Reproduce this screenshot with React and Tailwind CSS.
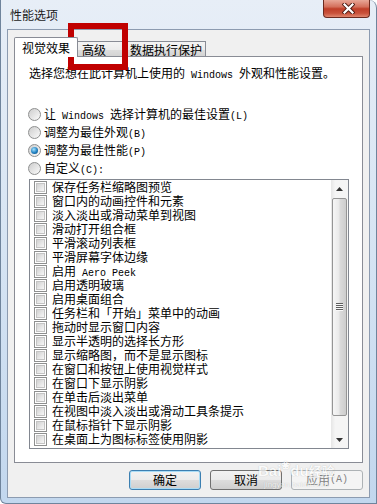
import React from "react";

// SimSun-like half-width latin run
const M = ({ children }) => (
  <span className="font-['Liberation_Mono',monospace] text-[10px] leading-[10px]">{children}</span>
);

const mixText = (text) =>
  text.split(/([\x20-\x7e]+)/).map((part, i) =>
    /^[\x20-\x7e]+$/.test(part) ? <M key={i}>{part}</M> : <span key={i}>{part}</span>
  );

const effects = [
  "保存任务栏缩略图预览",
  "窗口内的动画控件和元素",
  "淡入淡出或滑动菜单到视图",
  "滑动打开组合框",
  "平滑滚动列表框",
  "平滑屏幕字体边缘",
  "启用 Aero Peek",
  "启用透明玻璃",
  "启用桌面组合",
  "任务栏和「开始」菜单中的动画",
  "拖动时显示窗口内容",
  "显示半透明的选择长方形",
  "显示缩略图，而不是显示图标",
  "在窗口和按钮上使用视觉样式",
  "在窗口下显示阴影",
  "在单击后淡出菜单",
  "在视图中淡入淡出或滑动工具条提示",
  "在鼠标指针下显示阴影",
  "在桌面上为图标标签使用阴影",
];

const radios = [
  { label: "让 Windows 选择计算机的最佳设置(L)", checked: false },
  { label: "调整为最佳外观(B)", checked: false },
  { label: "调整为最佳性能(P)", checked: true },
  { label: "自定义(C):", checked: false },
];

const Radio = ({ checked }) => (
  <span className="flex h-[13px] w-[13px] shrink-0 items-center justify-center rounded-full border border-[#8e8f8f] bg-linear-to-br from-[#cdcdcd] to-[#fbfbfb]">
    {checked && (
      <span className="h-[7px] w-[7px] rounded-full bg-[radial-gradient(circle_at_40%_35%,#a6e3ff,#1f7fc0_55%,#0b4676)]" />
    )}
  </span>
);

const Checkbox = () => (
  <span className="flex h-[13px] w-[13px] shrink-0 items-center justify-center border border-[#8e8f8f] bg-white">
    <span className="h-[9px] w-[9px] border border-[#c4c4c4] bg-linear-to-br from-[#d2d2d2] to-[#f7f7f7]" />
  </span>
);

const Button = ({ children, primary, disabled }) => (
  <div
    className={`flex h-[20px] w-[72px] items-center justify-center rounded-[3px] border leading-[14px] ${
      disabled
        ? "border-[#adb2b5] bg-[#f4f4f4] text-[#838383]"
        : primary
        ? "border-[#3c7fb1] bg-[linear-gradient(#f2f2f2,#ebebeb_50%,#dddddd_50%,#cfcfcf)] shadow-[inset_0_0_0_1px_#a9dcf6]"
        : "border-[#707070] bg-[linear-gradient(#f2f2f2,#ebebeb_50%,#dddddd_50%,#cfcfcf)]"
    }`}
  >
    {children}
  </div>
);

const App = () => {
  return (
    <div className="relative h-[504px] w-[377px] overflow-hidden bg-white font-['Noto_Sans_CJK_SC','Liberation_Sans',sans-serif] text-[12px] text-black">
      {/* Window frame */}
      <div className="flex h-full w-full flex-col rounded-tr-[8px] rounded-bl-[6px] border-r border-b border-l border-[#6f849c] bg-linear-to-b from-[#e7eef7] via-[#d6e4f3] to-[#c2d7ee]">
        {/* Title bar */}
        <div className="flex h-[29px] shrink-0 items-start justify-between">
          <span className="ml-[9px] mt-[8px] leading-[14px] text-[#1a1a1a]">性能选项</span>
          <div className="mr-[6px] flex h-[18px] w-[47px] items-center justify-center rounded-b-[4px] border border-t-0 border-[#6b2a1f] bg-[linear-gradient(#e8a797,#d4705c_40%,#bf3e28_52%,#c9523b_78%,#e0866e)]">
            <svg width="13" height="11" viewBox="0 0 13 11" className="ml-[3px]">
              <path d="M2.5 1.5 L10.5 9.5 M10.5 1.5 L2.5 9.5" stroke="#4b1a12" strokeWidth="4" strokeLinecap="square" />
              <path d="M2.5 1.5 L10.5 9.5 M10.5 1.5 L2.5 9.5" stroke="#ffffff" strokeWidth="2.2" strokeLinecap="square" />
            </svg>
          </div>
        </div>

        {/* Client area */}
        <div className="ml-[6px] flex h-[469px] w-[363px] flex-col border border-[#8c9bb0] bg-[#f0f0f0] pl-[6px] pt-[7px]">
          {/* Tabs */}
          <div className="flex h-[20px] items-end">
            <div className="relative z-10 flex h-[20px] w-[64px] items-center rounded-t-[2px] border border-b-0 border-[#898c95] bg-white pl-[7px] leading-[14px]">
              视觉效果
            </div>
            <div className="-ml-px flex h-[16px] w-[48px] items-center border border-b-0 border-[#898c95] bg-[linear-gradient(#f4f4f4,#ececec_50%,#dedede_50%,#d2d2d2)] pl-[4px] leading-[14px]">
              高级
            </div>
            <div className="-ml-px flex h-[16px] w-[82px] items-center border border-b-0 border-[#898c95] bg-[linear-gradient(#f4f4f4,#ececec_50%,#dedede_50%,#d2d2d2)] pl-[5px] leading-[14px]">
              数据执行保护
            </div>
          </div>

          {/* Tab panel */}
          <div className="-mt-px flex h-[407px] w-[349px] flex-col border border-[#898c95] bg-white">
            <p className="ml-[14px] mt-[9px] leading-[14px]">{mixText("选择您想在此计算机上使用的 Windows 外观和性能设置。")}</p>

            <div className="mt-[24px] flex flex-col">
              {radios.map((r) => (
                <div key={r.label} className="ml-[13px] flex h-[18px] items-center gap-[3px] leading-[14px]">
                  <Radio checked={r.checked} />
                  <span>{mixText(r.label)}</span>
                </div>
              ))}
            </div>

            {/* Effects list */}
            <div className="ml-[14px] mt-[2px] flex h-[270px] w-[320px] border border-[#828790] bg-white">
              <div className="flex flex-1 flex-col pl-[4px]">
                {effects.map((e) => (
                  <div key={e} className="flex h-[14px] items-center gap-[5px] leading-[14px]">
                    <Checkbox />
                    <span className="whitespace-nowrap">{mixText(e)}</span>
                  </div>
                ))}
              </div>

              {/* Scrollbar */}
              <div className="flex h-full w-[17px] flex-col bg-[linear-gradient(90deg,#e6e6e6,#f5f5f5_25%,#f5f5f5)]">
                <div className="flex h-[18px] shrink-0 items-center justify-center">
                  <svg width="7" height="4" viewBox="0 0 7 4">
                    <polygon points="3.5,0 7,4 0,4" fill="#333333" />
                  </svg>
                </div>
                <div className="mx-auto flex h-[218px] w-[15px] shrink-0 items-center justify-center rounded-[2px] border border-[#959595] bg-[linear-gradient(90deg,#f6f6f6,#eaeaea_45%,#dadada_55%,#cdcdcd)]">
                  <svg width="7" height="8" viewBox="0 0 7 8">
                    <rect x="0" y="0" width="7" height="1" fill="#5e5e5e" />
                    <rect x="0" y="1" width="7" height="1" fill="#f8f8f8" />
                    <rect x="0" y="2" width="7" height="1" fill="#5e5e5e" />
                    <rect x="0" y="3" width="7" height="1" fill="#f8f8f8" />
                    <rect x="0" y="4" width="7" height="1" fill="#5e5e5e" />
                    <rect x="0" y="5" width="7" height="1" fill="#f8f8f8" />
                    <rect x="0" y="6" width="7" height="1" fill="#5e5e5e" />
                    <rect x="0" y="7" width="7" height="1" fill="#f8f8f8" />
                  </svg>
                </div>
                <div className="flex-1" />
                <div className="flex h-[17px] shrink-0 items-center justify-center">
                  <svg width="7" height="4" viewBox="0 0 7 4">
                    <polygon points="0,0 7,0 3.5,4" fill="#333333" />
                  </svg>
                </div>
              </div>
            </div>
          </div>

          {/* Dialog buttons */}
          <div className="mt-[7px] flex w-[349px] justify-end gap-[9px]">
            <Button primary>确定</Button>
            <Button>取消</Button>
            <Button disabled>
              <span>应用</span>
              <M>(A)</M>
            </Button>
          </div>
        </div>
      </div>

      {/* Watermark */}
      <div className="pointer-events-none absolute left-[258px] top-[456px] flex flex-col items-center text-white opacity-70 [text-shadow:0_0_1px_rgba(0,0,0,0.35)]">
        <div className="flex items-end font-['Liberation_Sans',sans-serif] text-[15px] font-bold leading-[18px]">
          <span>Bai</span>
          <span className="mb-[6px] text-[11px]">❀</span>
          <span>du</span>
          <span className="font-['Noto_Sans_CJK_SC',sans-serif] text-[13px] font-bold">经验</span>
        </div>
        <span className="font-['Liberation_Sans',sans-serif] text-[8px] leading-[10px]">jingyan.baidu.com</span>
      </div>

      {/* Red annotation box */}
      <div className="pointer-events-none absolute left-[68px] top-[23px] h-[47px] w-[60px] border-[6px] border-[#c00000]" />
    </div>
  );
};

export default App;
